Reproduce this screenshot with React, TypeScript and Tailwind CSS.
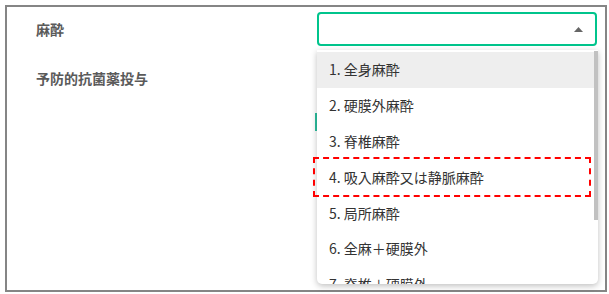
const options = [
  "1. 全身麻酔",
  "2. 硬膜外麻酔",
  "3. 脊椎麻酔",
  "4. 吸入麻酔又は静脈麻酔",
  "5. 局所麻酔",
  "6. 全麻＋硬膜外",
  "7. 脊椎＋硬膜外",
];

export default function App() {
  return (
    <div
      className="w-[609px] h-[294px] bg-white p-[5px]"
      style={{ fontFamily: '"Noto Sans CJK JP", "Noto Sans", sans-serif' }}
    >
      <div className="h-[287px] w-[602px] border-2 border-[#858585] pt-[5px]">
        <div className="flex items-center h-[34px]">
          <div className="w-[310px] pl-[29px] text-[14px] font-semibold text-[#5a5a5a]">麻酔</div>
          <div className="relative">
            <div className="w-[280px] h-[34px] rounded-[4px] border-2 border-[#00c48c] flex items-center justify-end pr-[12px]">
              <svg width="9" height="5" viewBox="0 0 9 5">
                <path d="M0 5 L4.5 0 L9 5 Z" fill="#666" />
              </svg>
            </div>
            <div className="absolute left-0 top-[38px] w-[281px] h-[234px] rounded-b-[5px] bg-white shadow-[0_2px_6px_rgba(0,0,0,0.25)] overflow-hidden flex z-10">
              <div className="flex-1 pt-[2px]">
                {options.map((o, i) => (
                  <div
                    key={o}
                    className={
                      "h-[35.8px] flex items-center pl-[12px] text-[14px] text-[#333] " +
                      (i === 0 ? "bg-[#eeeeee]" : "")
                    }
                  >
                    {o}
                  </div>
                ))}
              </div>
              <div className="w-[4px] pt-[1px]">
                <div className="h-[169px] bg-[#c1c1c1]" />
              </div>
            </div>
            <div className="absolute left-[-4px] top-[145px] w-[278px] h-[40px] border-2 border-dashed border-[#ff0000] z-20 pointer-events-none" />
          </div>
        </div>
        <div className="flex h-[100px] pt-[22px]">
          <div className="w-[308px] pl-[29px] text-[14px] font-semibold text-[#5a5a5a]">予防的抗菌薬投与</div>
          <div className="mt-[45px] w-[2px] h-[18px] bg-[#2bbf9f]" />
        </div>
      </div>
    </div>
  );
}
